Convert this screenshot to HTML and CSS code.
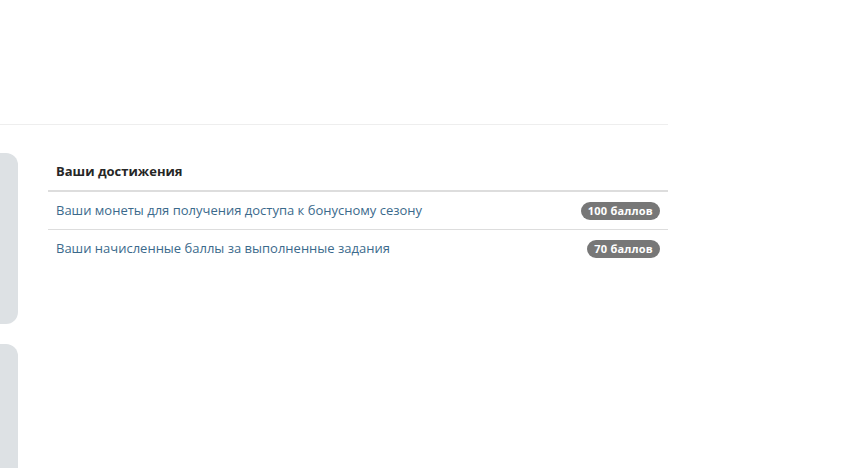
FILE: index.html
```html
<!DOCTYPE html>
<html lang="ru">
<head>
    <meta charset="UTF-8">
    <meta name="viewport" content="width=device-width, initial-scale=1.0">
    <title>Ваши достижения</title>
    <link rel="stylesheet" href="styles.css">
</head>
<body>
    <div class="page">
        <header class="top-bar"></header>

        <div class="main">
            <aside class="side">
                <div class="side-card"></div>
                <div class="side-card side-card-long"></div>
            </aside>

            <section class="content">
                <table class="stats-table">
                    <thead>
                        <tr>
                            <th colspan="2">Ваши достижения</th>
                        </tr>
                    </thead>
                    <tbody>
                        <tr>
                            <td class="stat-name">Ваши монеты для получения доступа к бонусному сезону</td>
                            <td class="stat-value"><span class="badge">100 баллов</span></td>
                        </tr>
                        <tr>
                            <td class="stat-name">Ваши начисленные баллы за выполненные задания</td>
                            <td class="stat-value"><span class="badge">70 баллов</span></td>
                        </tr>
                    </tbody>
                </table>
            </section>
        </div>
    </div>
</body>
</html>
```

FILE: styles.css
```css
/* Base */
* {
    margin: 0;
    padding: 0;
    box-sizing: border-box;
}

body {
    background: #fff;
    color: #333;
    font-family: "Open Sans", "Liberation Sans", sans-serif;
    font-size: 13px;
    line-height: 21px;
    overflow: hidden;
}

.page {
    width: 668px;
}

/* Top bar */
.top-bar {
    height: 125px;
    border-bottom: 1px solid #eee;
}

/* Main area */
.main {
    display: flex;
    gap: 30px;
    padding-top: 28px;
}

.side {
    width: 18px;
    display: flex;
    flex-direction: column;
    gap: 20px;
}

.side-card {
    height: 171px;
    background: #dde1e4;
    border-radius: 0 12px 12px 0;
}

.side-card-long {
    height: 124px;
    border-radius: 0 12px 0 0;
}

.content {
    flex: 1;
}

/* Table */
.stats-table {
    width: 100%;
    border-collapse: collapse;
}

.stats-table th {
    text-align: left;
    font-weight: 700;
    color: #262626;
    padding: 8px;
    border-bottom: 2px solid #ddd;
}

.stats-table td {
    padding: 8px;
    border-top: 1px solid #ddd;
    vertical-align: top;
}

.stats-table tbody tr:first-child td {
    border-top: none;
}

.stat-name {
    color: #3b6a8c;
}

.stat-value {
    text-align: right;
    white-space: nowrap;
}

.badge {
    display: inline-block;
    min-width: 10px;
    padding: 3px 7px 4px;
    margin-top: 2px;
    font-size: 11px;
    font-weight: 700;
    letter-spacing: 0.2px;
    line-height: 1;
    color: #fff;
    background-color: #777;
    border-radius: 10px;
}
```
